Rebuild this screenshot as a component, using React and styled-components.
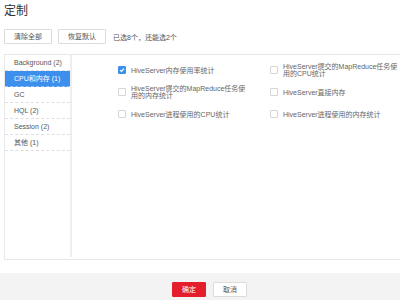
import React, { useState } from "react";
import styled, { createGlobalStyle } from "styled-components";

const GlobalStyle = createGlobalStyle`
  html, body {
    margin: 0;
    padding: 0;
    width: 400px;
    height: 300px;
    overflow: hidden;
    background: #fff;
  }
  body {
    font-family: "Liberation Sans", "Noto Sans CJK SC", sans-serif;
  }
`;

const Page = styled.div`
  width: 400px;
  height: 300px;
  display: flex;
  flex-direction: column;
`;

const Body = styled.div`
  padding: 4px 0 0 4px;
  display: flex;
  flex-direction: column;
`;

const Title = styled.h1`
  margin: 0;
  font-size: 12px;
  line-height: 14px;
  font-weight: normal;
  color: #333;
`;

const Toolbar = styled.div`
  display: flex;
  align-items: center;
  gap: 6px;
  margin-top: 11px;
  height: 15px;
`;

const Button = styled.button`
  box-sizing: border-box;
  height: 15px;
  width: ${(p) => p.$w || 48}px;
  padding: 0;
  border: 1px solid ${(p) => (p.$primary ? "#e41f2b" : "#dcdcdc")};
  background: ${(p) => (p.$primary ? "#e41f2b" : "#fff")};
  color: ${(p) => (p.$primary ? "#fff" : "#555")};
  font-family: inherit;
  font-size: 7px;
  line-height: 13px;
  border-radius: 1px;
`;

const Hint = styled.span`
  margin-left: 1px;
  font-size: 7px;
  color: #555;
`;

/* the panel continues past the right edge of the shot, so no right border */
const Panel = styled.div`
  box-sizing: border-box;
  margin-top: 10px;
  height: 206px;
  border: 1px solid #e8e8e8;
  border-right: none;
  display: flex;
`;

const Sidebar = styled.ul`
  list-style: none;
  margin: 0 0 2px 0;
  padding: 0;
  width: 65px;
  flex: none;
  border-right: 2px solid #eee;
`;

const NavItem = styled.li`
  height: 15px;
  line-height: 15px;
  padding-left: 9px;
  font-size: 7px;
  color: ${(p) => (p.$active ? "#fff" : "#555")};
  background: ${(p) => (p.$active ? "#3d8fee" : "transparent")};
  border-bottom: 1px dashed ${(p) => (p.$active ? "#9cc6f5" : "#dedede")};
`;

const Content = styled.div`
  flex: 1;
  min-width: 0;
  padding: 4px 0 0 46px;
  display: grid;
  grid-template-columns: 152px minmax(0, 1fr);
  grid-auto-rows: 22px;
  align-content: start;
  align-items: center;
`;

const Option = styled.label`
  display: flex;
  align-items: center;
  gap: 5px;
`;

const Box = styled.span`
  box-sizing: border-box;
  width: 8px;
  height: 8px;
  flex: none;
  border-radius: 1px;
  border: 1px solid ${(p) => (p.$checked ? "#3d8fee" : "#d6d6d6")};
  background: ${(p) => (p.$checked ? "#3d8fee" : "#fff")};
  display: flex;
  align-items: center;
  justify-content: center;
`;

const Label = styled.span`
  width: 117px;
  font-size: 7px;
  line-height: 7px;
  color: #666;
`;

/* page is a little wider than the shot, so the buttons sit right of centre */
const Footer = styled.div`
  margin-top: 13px;
  flex: 1;
  background: #f3f3f3;
  display: flex;
  justify-content: center;
  align-items: flex-start;
  gap: 7px;
  padding: 9px 0 0 19px;
`;

const nav = [
  "Background (2)",
  "CPU和内存 (1)",
  "GC",
  "HQL (2)",
  "Session (2)",
  "其他 (1)",
];

const options = [
  { text: "HiveServer内存使用率统计", checked: true },
  { text: "HiveServer提交的MapReduce任务使用的CPU统计" },
  { text: "HiveServer提交的MapReduce任务使用的内存统计" },
  { text: "HiveServer直接内存" },
  { text: "HiveServer进程使用的CPU统计" },
  { text: "HiveServer进程使用的内存统计" },
];

const Check = () => (
  <svg width="6" height="6" viewBox="0 0 6 6">
    <path d="M1 3.1 L2.5 4.5 L5 1.6" fill="none" stroke="#fff" strokeWidth="1.2" />
  </svg>
);

export default function App() {
  const [active] = useState(1);
  return (
    <Page>
      <GlobalStyle />
      <Body>
        <Title>定制</Title>
        <Toolbar>
          <Button>清除全部</Button>
          <Button>恢复默认</Button>
          <Hint>已选8个，还能选2个</Hint>
        </Toolbar>
        <Panel>
          <Sidebar>
            {nav.map((n, i) => (
              <NavItem key={n} $active={i === active}>
                {n}
              </NavItem>
            ))}
          </Sidebar>
          <Content>
            {options.map((o) => (
              <Option key={o.text}>
                <Box $checked={o.checked}>{o.checked && <Check />}</Box>
                <Label>{o.text}</Label>
              </Option>
            ))}
          </Content>
        </Panel>
      </Body>
      <Footer>
        <Button $primary $w={34}>确定</Button>
        <Button $w={34}>取消</Button>
      </Footer>
    </Page>
  );
}
